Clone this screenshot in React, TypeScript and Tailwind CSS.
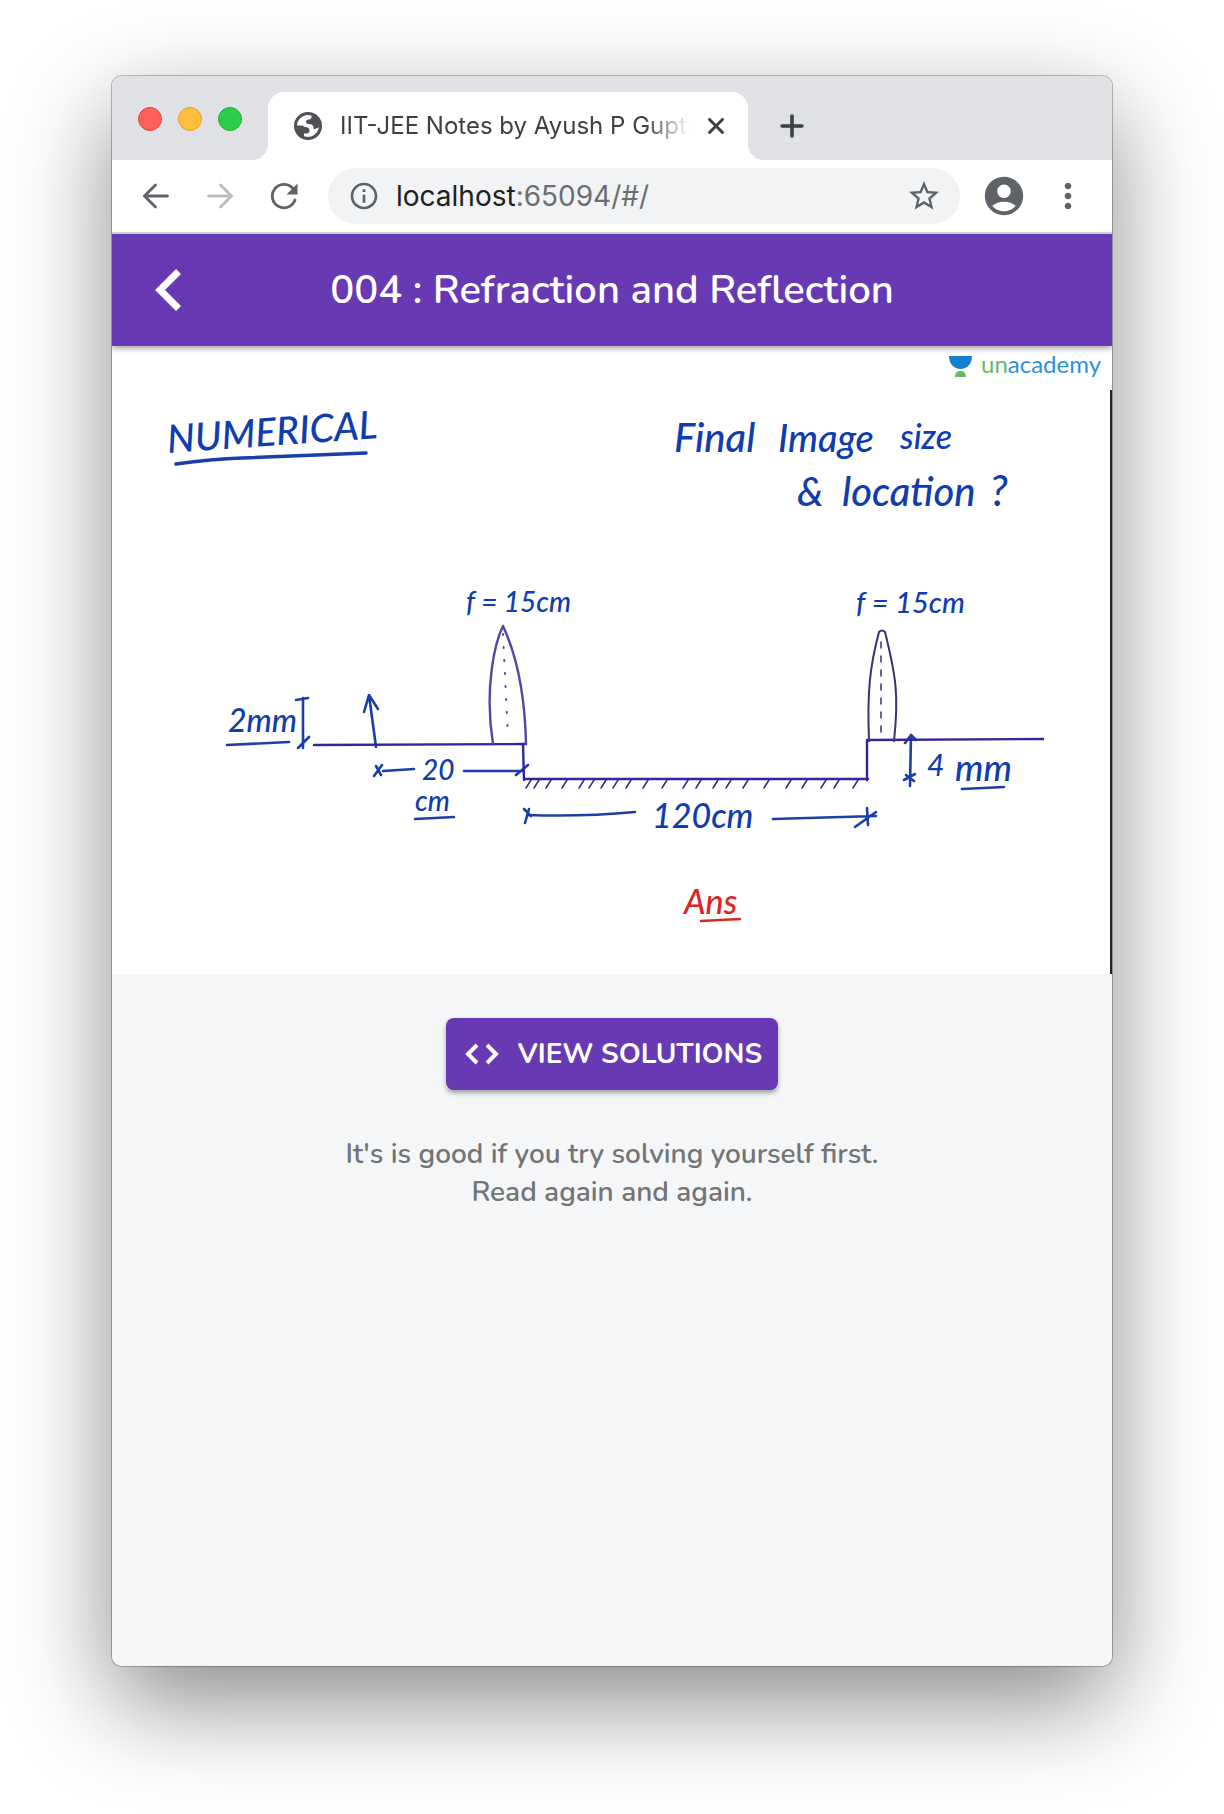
import type { ReactNode } from "react";
import { MdAccountCircle, MdInfoOutline, MdMoreVert, MdStarBorder } from "react-icons/md";

function TrafficLights() {
  return (
    <div className="flex w-[156px] shrink-0 items-center gap-4 pb-[14px] pl-[26px]">
      <button aria-label="Close window" className="size-6 rounded-full border border-[#e2463f] bg-[#ff6059]" />
      <button aria-label="Minimize window" className="size-6 rounded-full border border-[#e1a12c] bg-[#ffbf3d]" />
      <button aria-label="Zoom window" className="size-6 rounded-full border border-[#1fae3a] bg-[#2bce4b]" />
    </div>
  );
}

function Globe() {
  return (
    <svg viewBox="0 0 28 28" className="size-7 shrink-0" aria-hidden="true">
      <circle cx="14" cy="14" r="14" fill="#4f5157" />
      <path
        d="M3 13.500C3.200 8.500 7.500 3.600 13 3.100L17.500 3.600V5C17.500 6.500 16.500 7.500 15 7.500C13 7.500 12 8.500 12 9.500C12 11 13 12 14.500 12C18 12 19.500 13.500 19.500 15.500V17C21 17 23.500 16.500 25 15C24 20.500 19.500 25 14 25L10 24.300V21.500H13C14.500 21.500 15.500 20.500 15.500 19C15.500 16 13.500 15 11.500 15C9.500 15 9.500 13.500 8 13.500Z"
        fill="#fff"
      />
    </svg>
  );
}

function TabStrip() {
  return (
    <div className="flex h-[84px] bg-[#dfe1e5] pt-4">
      <TrafficLights />
      <div className="relative flex w-[480px] min-w-0 items-center rounded-t-2xl bg-white pr-[22px] pl-[26px] before:absolute before:right-full before:bottom-0 before:size-4 before:bg-[radial-gradient(circle_at_0_0,transparent_16px,white_16px)] after:absolute after:bottom-0 after:left-full after:size-4 after:bg-[radial-gradient(circle_at_100%_0,transparent_16px,white_16px)]">
        <Globe />
        <span className="ml-[18px] min-w-0 flex-1 overflow-hidden text-[24px] whitespace-nowrap text-[#3c4043] [mask-image:linear-gradient(to_right,black_87%,transparent)]">
          IIT-JEE Notes by Ayush P Gupta
        </span>
        <button aria-label="Close tab" className="ml-4">
          <svg viewBox="0 0 20 20" className="size-5" fill="none" stroke="#3c4043" strokeWidth="3" strokeLinecap="round">
            <path d="M3.500 3.500L16.500 16.500M16.500 3.500L3.500 16.500" />
          </svg>
        </button>
      </div>
      <button aria-label="New tab" className="ml-8 flex items-center">
        <svg viewBox="0 0 24 24" className="size-6" fill="none" stroke="#3c4043" strokeWidth="3.600" strokeLinecap="round">
          <path d="M12 2V22M2 12H22" />
        </svg>
      </button>
    </div>
  );
}

function NavButton({ label, children, muted }: { label: string; children: ReactNode; muted?: boolean }) {
  return (
    <button aria-label={label} disabled={muted} className={muted ? "text-[#babcbf]" : "text-[#5f6368]"}>
      <svg viewBox="0 0 28 28" className="size-7" fill="none" stroke="currentColor" strokeWidth="2.800" strokeLinecap="round">
        {children}
      </svg>
    </button>
  );
}

function Toolbar() {
  return (
    <div className="flex h-[74px] items-center border-b-2 border-[#dcdee2] bg-white pr-6 pl-[30px]">
      <div className="flex gap-9">
        <NavButton label="Back">
          <path d="M25.500 14H3M13.500 3L2.500 14L13.500 25" />
        </NavButton>
        <NavButton label="Forward" muted>
          <path d="M2.500 14H25M14.500 3L25.500 14L14.500 25" />
        </NavButton>
        <NavButton label="Reload">
          <path d="M25 18A11.700 11.700 0 1 1 22.500 6" />
          <path d="M27.500 1.500V12.500H16.500Z" fill="currentColor" stroke="none" />
        </NavButton>
      </div>
      <div className="ml-[30px] flex h-14 min-w-0 flex-1 items-center rounded-full bg-[#f1f3f4] pr-[18px] pl-5">
        <MdInfoOutline className="size-8 shrink-0 text-[#5f6368]" />
        <div className="ml-4 min-w-0 flex-1 truncate text-[28px] leading-9 text-[#6b6e72]">
          <span className="text-[#202124]">localhost</span>:65094/#/
        </div>
        <button aria-label="Bookmark this page">
          <MdStarBorder className="size-9 text-[#5f6368]" />
        </button>
      </div>
      <button aria-label="Profile" className="ml-[21px]">
        <MdAccountCircle className="size-[46px] text-[#5f6368]" />
      </button>
      <button aria-label="Menu" className="ml-[21px]">
        <MdMoreVert className="size-10 text-[#5f6368]" />
      </button>
    </div>
  );
}

function AppBar() {
  return (
    <header className="relative z-10 grid h-28 grid-cols-[56px_1fr_56px] items-center bg-[#673ab3] px-7 text-white shadow-[0_2px_6px_rgba(0,0,0,0.4)]">
      <button aria-label="Go back" className="flex justify-center">
        <svg viewBox="0 0 44 44" className="size-11" fill="none" stroke="currentColor" strokeWidth="7">
          <path d="M32.500 3.500L14 22L32.500 40.500" />
        </svg>
      </button>
      <h1 className="text-center font-['Nunito','Lato',sans-serif] text-[40px] leading-[56px] font-semibold">
        004 : Refraction and Reflection
      </h1>
    </header>
  );
}

const hatches = [413, 421, 433, 449, 466, 476, 488, 500, 513, 530, 549, 570, 583, 600, 613, 630, 651, 673, 689, 708, 721, 740];

function NumericalSheet() {
  return (
    <svg viewBox="0 0 1000 628" className="block w-full bg-white" role="img" aria-label="Two lenses and a mirror on a bench">
      <path d="M837 10H860C860 18 855 23 848.500 23S837 18 837 10Z" fill="#1380d0" />
      <path d="M843 31C843 27 845 25 848.500 25S854 27 854 31Z" fill="#62bb6c" />
      <text x="869" y="27" fontFamily="Lato, sans-serif" fontSize="24" fill="#2f8fd8">
        <tspan fill="#62bb6c">un</tspan>academy
      </text>
      <path d="M999 44V628" stroke="#222" strokeWidth="2" />

      <g fill="#0f3cae" fontFamily="Lato, sans-serif" fontStyle="italic" fontWeight="500">
        <text x="56" y="107" fontSize="39" transform="rotate(-4 56 107)">NUMERICAL</text>
        <text x="562" y="106" fontSize="40">Final</text>
        <text x="666" y="106" fontSize="38">Image</text>
        <text x="788" y="103" fontSize="34">size</text>
        <text x="685" y="160" fontSize="40">&amp;</text>
        <text x="730" y="160" fontSize="40">location</text>
        <text x="878" y="160" fontSize="42">?</text>
        <text x="354" y="266" fontSize="28">f = 15cm</text>
        <text x="744" y="267" fontSize="29">f = 15cm</text>
        <text x="116" y="386" fontSize="32">2mm</text>
        <text x="310" y="434" fontSize="28">20</text>
        <text x="303" y="465" fontSize="28">cm</text>
        <text x="540" y="482" fontSize="34">120cm</text>
        <text x="815" y="430" fontSize="30">4</text>
        <text x="843" y="435" fontSize="36">mm</text>
      </g>

      <g fill="none" stroke="#1b3fa8" strokeWidth="2.600" strokeLinecap="round" strokeLinejoin="round">
        <path d="M64 118Q100 113 130 112T254 107" strokeWidth="3.600" />
        <path d="M115 399L177 396M191 352V402M184 354L196 352M186 402L197 391" />
        <path d="M264 401L257 349M252 366L257 349L266 363" />
        <path d="M271 425L302 423M262 430L270 419M264 420L269 429M352 425H410M404 429L416 419" />
        <path d="M303 473L342 471" />
        <path d="M415 469Q470 471 523 466M412 463L419 470M413 477L417 463" />
        <path d="M661 473L764 470M755 462L756 479M743 481L764 466" />
        <path d="M798 440L799 389M793 397L799 389L804 394M792 434L803 428M794 429L802 435" />
        <path d="M850 443L892 441" />
      </g>

      <g fill="none" stroke="#33259a" strokeWidth="2.400" strokeLinecap="round">
        <path d="M202 399L414 398M411 398L412 434M412 433H756M755 434V394M755 394L931 393" />
        <path d="M391 280C383 296 372 342 381 398M391 280C404 308 413 348 414 398" stroke="#5544a4" />
        <path d="M757 395C755 345 758 320 767 286Q770 283 773 286C784 330 787 350 782 395" strokeWidth="2" stroke="#3b3270" />
        <path d="M391 288L396 391" strokeDasharray="1 12" strokeWidth="2" stroke="#5544a4" />
        <path d="M769 296V393" strokeDasharray="6 8" strokeWidth="1.500" stroke="#3b3270" />
        {hatches.map((x) => (
          <path key={x} d={`M${x + 6} 434L${x + 1} 442`} strokeWidth="1.500" />
        ))}
      </g>

      <text x="572" y="568" fill="#dc2626" fontFamily="Lato, sans-serif" fontStyle="italic" fontWeight="500" fontSize="34">
        Ans
      </text>
      <path d="M589 575L628 573" stroke="#dc2626" strokeWidth="2.500" strokeLinecap="round" />
    </svg>
  );
}

export default function App() {
  return (
    <div className="flex min-h-screen bg-white px-28 pt-[76px] pb-[148px] font-['Inter',sans-serif]">
      <div className="flex min-w-0 flex-1 flex-col rounded-[10px] shadow-[0_0_0_1px_rgba(0,0,0,0.25),0_36px_100px_rgba(0,0,0,0.47)]">
        <div className="flex flex-1 flex-col overflow-hidden rounded-[10px] bg-[#f4f6f8]">
          <TabStrip />
          <Toolbar />
          <AppBar />
          <main className="flex flex-1 flex-col font-['Nunito','Lato',sans-serif]">
            <NumericalSheet />
            <div className="flex flex-col items-center px-6 pt-11">
              <button className="flex h-[72px] items-center gap-4 rounded-lg bg-[#673ab3] px-4 text-[28px] font-bold text-white shadow-[0_3px_5px_rgba(0,0,0,0.35)]">
                <svg viewBox="0 0 40 40" className="size-10" fill="none" stroke="currentColor" strokeWidth="4" aria-hidden="true">
                  <path d="M15 11L6 20L15 29M25 11L34 20L25 29" />
                </svg>
                VIEW SOLUTIONS
              </button>
              <p className="mt-[45px] text-center text-[28px] leading-[38px] font-semibold text-[#737475]">
                It's is good if you try solving yourself first.
                <br />
                Read again and again.
              </p>
            </div>
          </main>
        </div>
      </div>
    </div>
  );
}
